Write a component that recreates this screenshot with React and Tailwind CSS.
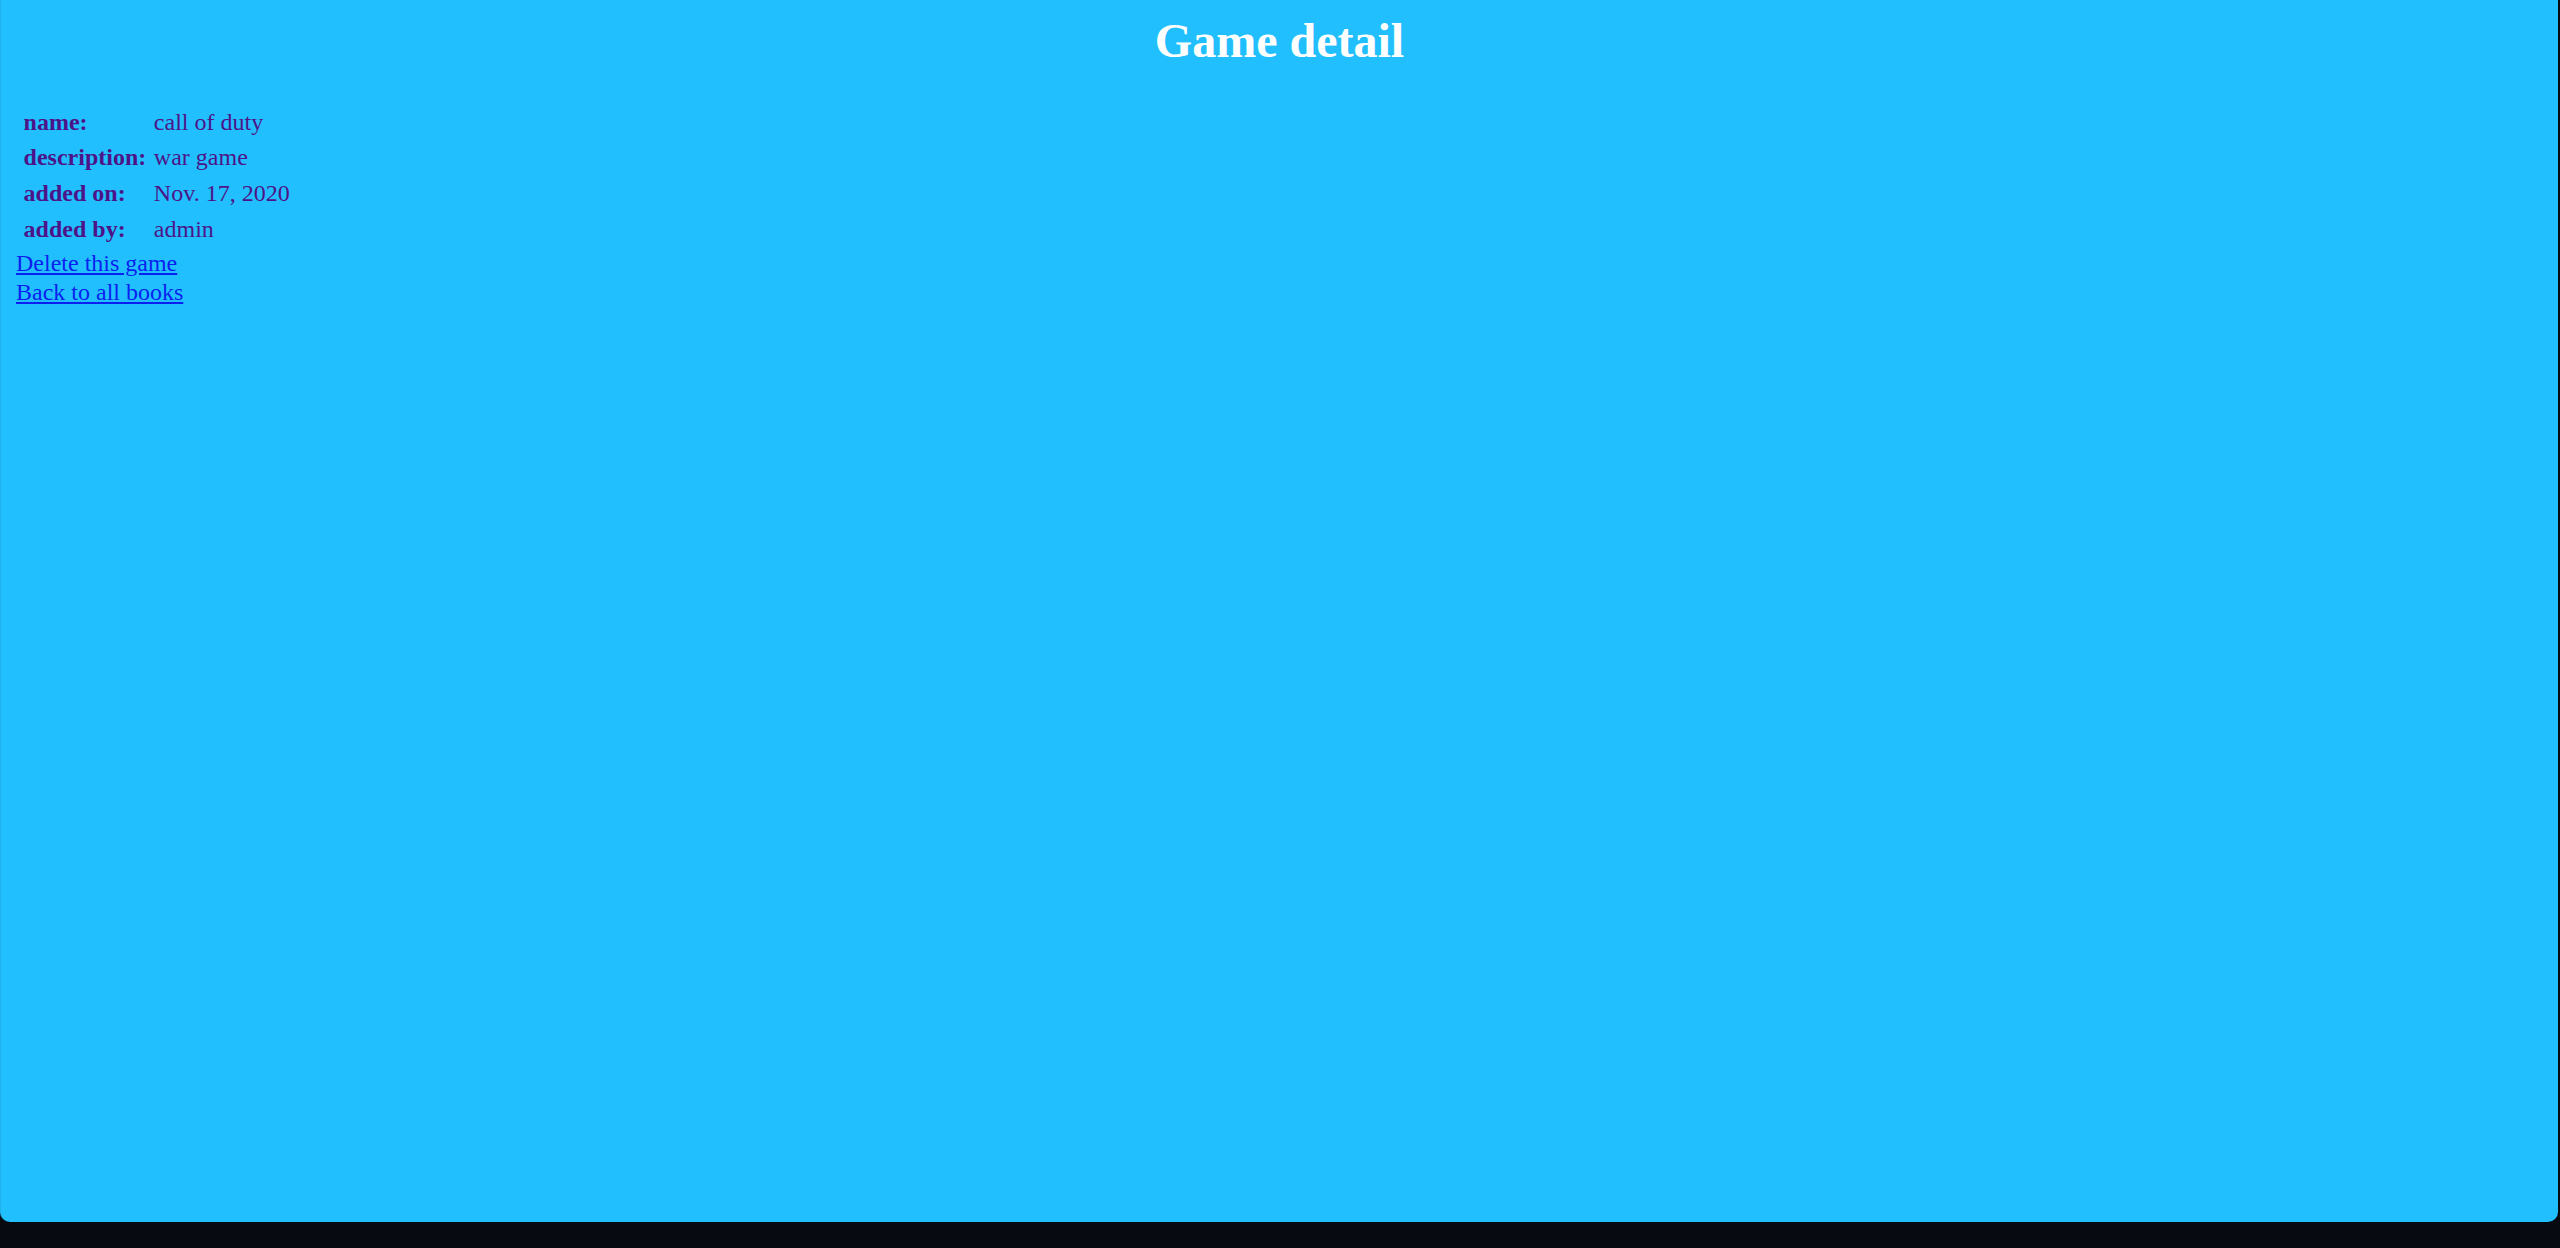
import React from 'react';

// Static details of the game shown on the page.
const DETAILS = [
    ['name:', 'call of duty'],
    ['description:', 'war game'],
    ['added on:', 'Nov. 17, 2020'],
    ['added by:', 'admin'],
];

export default function App() {
    return (
        <div className="w-full h-[1248px] overflow-hidden bg-[#070a11]" style={{ fontFamily: '"Liberation Serif", "Times New Roman", serif' }}>
            {/* Browser window content area */}
            <div className="w-[2558px] h-[1222px] bg-[#22bffe] rounded-b-[10px] border-l border-[#1fb3ee] pl-[15px] pt-[12px]">
                <h1 className="text-center text-white font-bold text-[48px] leading-[58.9px] mb-[32px] pr-[15px]">Game detail</h1>

                <table className="ml-[3px] border-separate border-spacing-[3.2px] text-[24px] leading-[29.6px] text-[#4c1488]">
                    <tbody>
                        {DETAILS.map(([label, value]) => (
                            <tr key={label}>
                                <th className="text-left font-bold p-[1.6px] pr-[3px]">{label}</th>
                                <td className="p-[1.6px]">{value}</td>
                            </tr>
                        ))}
                    </tbody>
                </table>

                <div className="text-[24px] leading-[29.4px]">
                    <a href="#" className="text-[#0a1ff0] underline">Delete this game</a>
                    <br />
                    <a href="#" className="text-[#0a1ff0] underline">Back to all books</a>
                </div>
            </div>
        </div>
    );
}
